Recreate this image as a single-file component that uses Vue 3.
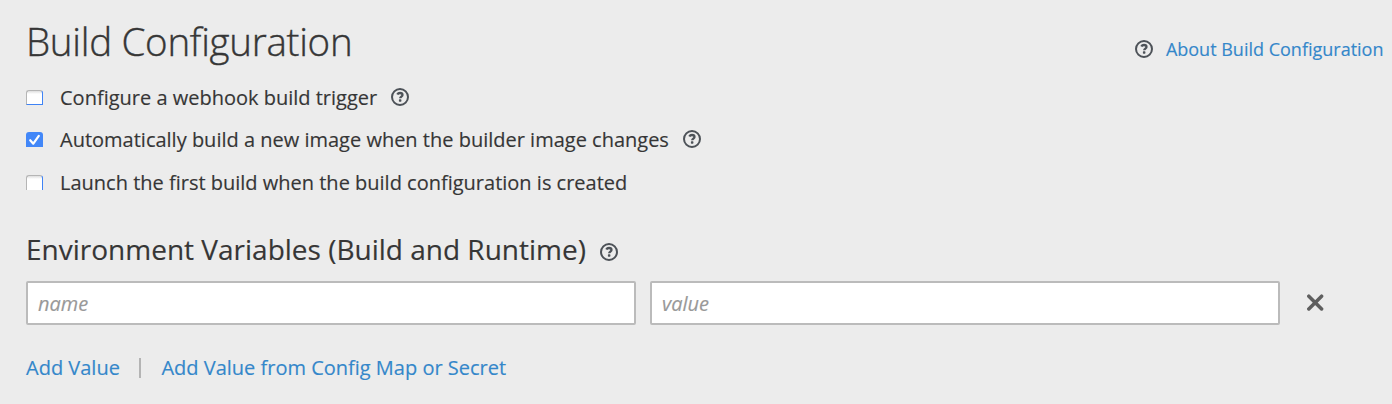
<script setup>
import { ref, h } from 'vue'

const options = ref([
  { id: 'webhook', label: 'Configure a webhook build trigger', checked: false, help: true },
  { id: 'image', label: 'Automatically build a new image when the builder image changes', checked: true, help: true },
  { id: 'launch', label: 'Launch the first build when the build configuration is created', checked: false, help: false },
])
const name = ref('')
const value = ref('')

const HelpIcon = () =>
  h('svg', { width: 18, height: 18, viewBox: '0 0 18 18', fill: 'none', stroke: '#4d5258' }, [
    h('circle', { cx: 9, cy: 9, r: 8, 'stroke-width': 2 }),
    h('path', { d: 'M6.3 6.5C6.9 5.4 7.8 5 9 5c1.5 0 2.5.8 2.5 2 0 1.6-2.3 1.6-2.3 3.3', 'stroke-width': 2.3 }),
    h('rect', { x: 7.9, y: 11.3, width: 2.5, height: 2.4, rx: 0.6, fill: '#4d5258', stroke: 'none' }),
  ])
</script>

<template>
  <main class="page">
    <header class="top">
      <h1 class="title">Build Configuration</h1>
      <div class="about">
        <HelpIcon class="help" />
        <a class="link">About Build Configuration</a>
      </div>
    </header>

    <div class="options">
      <div v-for="o in options" :key="o.id" class="option" :class="o.id">
        <label class="option-label">
          <input v-model="o.checked" type="checkbox" class="native" />
          <span class="box" :class="{ checked: o.checked }">
            <svg v-if="o.checked" width="17" height="15" viewBox="0 0 17 15">
              <path d="M4.2 8.2 7.3 11.7 12.8 3.8" fill="none" stroke="#fff" stroke-width="2.2" stroke-linecap="round" stroke-linejoin="round" />
            </svg>
          </span>
          <span class="text">{{ o.label }}</span>
        </label>
        <HelpIcon v-if="o.help" class="help" />
      </div>
    </div>

    <section class="env">
      <div class="env-head">
        <h2 class="subtitle">Environment Variables (Build and Runtime)</h2>
        <HelpIcon class="help" />
      </div>
      <div class="fields">
        <input v-model="name" class="field" placeholder="name" />
        <input v-model="value" class="field" placeholder="value" />
        <button class="remove" aria-label="Remove">
          <svg class="cross" width="18" height="18" viewBox="0 0 18 18">
            <path d="M2.8 2.2 15.6 15M15.6 2.2 2.8 15" fill="none" stroke="#5f5f5f" stroke-width="3.5" stroke-linecap="round" />
          </svg>
        </button>
      </div>
      <nav class="actions">
        <a class="link">Add Value</a>
        <span class="divider"></span>
        <a class="link">Add Value from Config Map or Secret</a>
      </nav>
    </section>
  </main>
</template>

<style>
body {
  background: #ececec;
}
</style>

<style scoped>
.page {
  box-sizing: border-box;
  height: 404px;
  padding: 18px 0 0 26px;
  background: #ececec;
  color: #363636;
  font-family: "Open Sans", sans-serif;
  font-size: 20px;
  overflow: hidden;
  white-space: nowrap;
  -webkit-text-stroke: 0.15px currentColor;
}
.top {
  display: flex;
  justify-content: space-between;
  height: 58px;
}
.title {
  margin: 0;
  font-size: 38.5px;
  font-weight: 300;
  line-height: 46px;
  letter-spacing: -0.28px;
  -webkit-text-stroke: 0.4px currentColor;
}
.about {
  display: flex;
  align-items: center;
  gap: 13px;
  height: 62px;
  padding-right: 8.5px;
  font-size: 18px;
}
.about .help {
  margin: -1px 0 0 -1px;
}
.help {
  flex: none;
}
.link {
  color: #3487ca;
  cursor: pointer;
}
.option {
  display: flex;
  align-items: center;
  gap: 14px;
  height: 42px;
}
.option.launch {
  height: 44px;
}
.option-label {
  display: flex;
  align-items: center;
}
.native {
  position: absolute;
  opacity: 0;
}
.box {
  box-sizing: border-box;
  width: 17px;
  height: 15px;
  margin-right: 17px;
  border: 1px solid #b5b5b5;
  border-right-color: #3f83f5;
  border-bottom-color: #3f83f5;
  border-radius: 3px 3px 0 0;
  background: linear-gradient(#dedede, #fff 3px);
}
.launch .box {
  border-bottom: 0;
}
.box.checked {
  border: 0;
  background: #4287f8;
}
.box svg {
  display: block;
}
.env-head {
  display: flex;
  align-items: center;
  gap: 14.5px;
  box-sizing: border-box;
  height: 77px;
  padding-top: 19px;
}
.subtitle {
  margin: 0 0 7px;
  font-size: 28px;
  font-weight: 400;
  line-height: 38px;
}
.fields {
  display: grid;
  grid-template-columns: 610px 630px 30px;
  column-gap: 14px;
  height: 44px;
}
.field {
  box-sizing: border-box;
  min-width: 0;
  height: 44px;
  padding: 0 10px;
  border: 2px solid #bbb;
  border-radius: 2px;
  background: #fff;
  font: 20px "Open Sans", sans-serif;
}
.field::placeholder {
  color: #999;
  font-style: italic;
  opacity: 1;
}
.remove {
  display: flex;
  align-items: center;
  padding: 0 0 0 12px;
  border: 0;
  background: none;
}
.cross {
  flex: none;
}
.actions {
  display: flex;
  align-items: center;
  height: 84px;
}
.divider {
  width: 2px;
  height: 20px;
  margin: 2px 20px 0 19.5px;
  background: #b4b4b4;
}
</style>
